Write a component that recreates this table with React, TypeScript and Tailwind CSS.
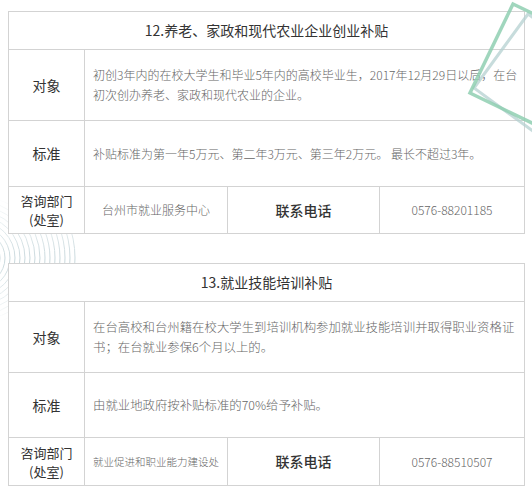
import React from "react";

const font = { fontFamily: '"Noto Sans CJK SC", "Noto Sans", sans-serif' };

type T = {
  title: string;
  target: React.ReactNode;
  standard: string;
  dept: string;
  deptClass: string;
  phone: string;
  rows: string;
  bodySize: string;
};

function Table({ t }: { t: T }) {
  return (
    <div
      className={`grid ${t.rows} grid-cols-[75px_142px_151px_144px] gap-px bg-[#d3d3d3] p-px w-[517px]`}
    >
      <div className="col-span-4 bg-white flex items-center justify-center text-[14px] text-[#333]">
        {t.title}
      </div>
      <div className="bg-white flex items-center justify-center text-[14px] text-[#333]">对象</div>
      <div className={`col-span-3 bg-white flex items-center pl-2 pr-1 ${t.bodySize} leading-[20px] text-[#666] font-light`}>
        <div>{t.target}</div>
      </div>
      <div className="bg-white flex items-center justify-center text-[14px] text-[#333]">标准</div>
      <div className={`col-span-3 bg-white flex items-center pl-2 pr-1 ${t.bodySize} leading-[20px] text-[#666] font-light`}>
        {t.standard}
      </div>
      <div className="bg-white flex flex-col items-center justify-center text-[13px] leading-[19px] text-[#333]">
        <span>咨询部门</span>
        <span>(处室)</span>
      </div>
      <div className={`bg-white flex items-center justify-center ${t.deptClass} text-[#666] font-light`}>
        {t.dept}
      </div>
      <div className="bg-white flex items-center justify-center text-[14px] font-medium text-[#333]">
        联系电话
      </div>
      <div className="bg-white flex items-center justify-center text-[12px] text-[#666] font-light">
        {t.phone}
      </div>
    </div>
  );
}

export default function App() {
  const t1: T = {
    title: "12.养老、家政和现代农业企业创业补贴",
    target:
      "初创3年内的在校大学生和毕业5年内的高校毕业生，2017年12月29日以后，在台初次创办养老、家政和现代农业的企业。",
    standard: "补贴标准为第一年5万元、第二年3万元、第三年2万元。 最长不超过3年。",
    dept: "台州市就业服务中心",
    deptClass: "text-[12px]",
    phone: "0576-88201185",
    rows: "grid-rows-[37px_70px_65px_46px]",
    bodySize: "text-[12px]",
  };
  const t2: T = {
    title: "13.就业技能培训补贴",
    target: "在台高校和台州籍在校大学生到培训机构参加就业技能培训并取得职业资格证书；在台就业参保6个月以上的。",
    standard: "由就业地政府按补贴标准的70%给予补贴。",
    dept: "就业促进和职业能力建设处",
    deptClass: "text-[10.5px]",
    phone: "0576-88510507",
    rows: "grid-rows-[37px_70px_64px_47px]",
    bodySize: "text-[12.4px]",
  };
  const radii = Array.from({ length: 16 }, (_, i) => 22 + i * 5);
  return (
    <div className="relative w-[532px] h-[493px] bg-white overflow-hidden" style={font}>
      <svg className="absolute left-0 top-0 z-0" width="532" height="493">
        <defs>
          <linearGradient id="fade" x1="0" y1="0" x2="0" y2="1">
            <stop offset="0.22" stopColor="#fff" stopOpacity="0" />
            <stop offset="0.5" stopColor="#fff" stopOpacity="1" />
            <stop offset="0.78" stopColor="#fff" stopOpacity="0" />
          </linearGradient>
          <mask id="m">
            <rect x="0" y="150" width="200" height="220" fill="url(#fade)" />
          </mask>
        </defs>
        <g mask="url(#m)">
          {radii.map((r) => (
            <circle key={r} cx={-22} cy={258} r={r} fill="none" stroke="#c8d8dc" strokeWidth="1" />
          ))}
        </g>
      </svg>
      <div className="relative z-10 pl-2 pt-[11px] flex flex-col gap-[29px]">
        <Table t={t1} />
        <Table t={t2} />
      </div>
      <svg className="absolute left-0 top-0 z-20 pointer-events-none" width="532" height="493">
        <polygon
          points="528,14 474,88 548,142 602,68"
          fill="none"
          stroke="#b4d0d0"
          strokeWidth="3"
          strokeOpacity="0.75"
        />
        <polygon
          points="513,4 470,93 559,136 602,47"
          fill="none"
          stroke="#8fcfb1"
          strokeWidth="3.5"
          strokeOpacity="0.85"
        />
      </svg>
    </div>
  );
}
